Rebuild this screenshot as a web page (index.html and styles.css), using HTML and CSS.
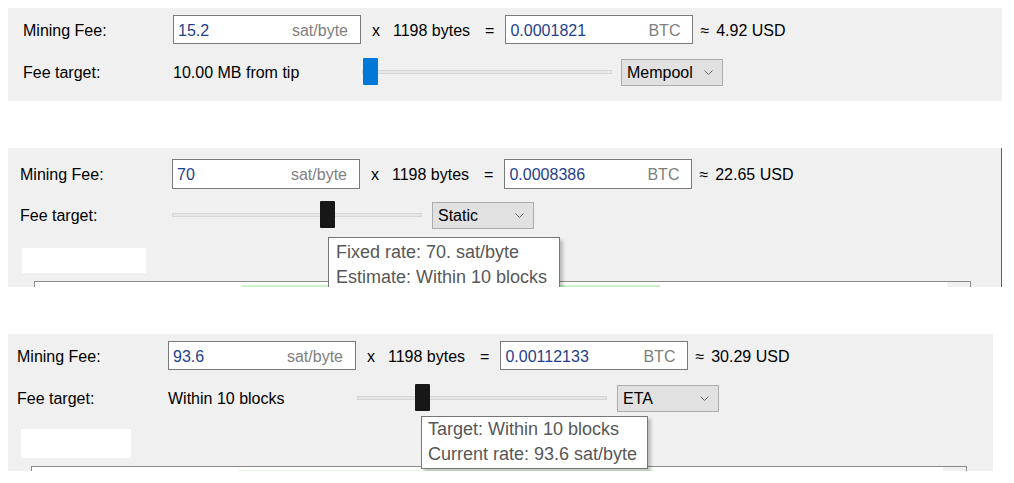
FILE: index.html
```html
<!DOCTYPE html>
<html lang="en">
<head>
    <meta charset="UTF-8">
    <title>Mining Fee</title>
    <link rel="stylesheet" href="styles.css">
</head>
<body>
    <!-- Mempool mode -->
    <div class="panel panel-mempool">
        <div class="row fee-row">
            <span class="label">Mining Fee:</span>
            <div class="amount"><span class="value">15.2</span><span class="unit">sat/byte</span></div>
            <span class="times">x</span>
            <span class="size">1198 bytes</span>
            <span class="equals">=</span>
            <div class="amount"><span class="value">0.0001821</span><span class="unit">BTC</span></div>
            <span class="approx">&asymp;</span>
            <span class="fiat">4.92 USD</span>
        </div>
        <div class="row target-row">
            <span class="label">Fee target:</span>
            <span class="target-text">10.00 MB from tip</span>
            <div class="slider">
                <div class="groove"></div>
                <div class="handle handle-blue" style="left: 1px;"></div>
            </div>
            <div class="combo"><span>Mempool</span>
                <svg width="9" height="5" viewBox="0 0 9 5"><polyline points="0.5,0.5 4.5,4.5 8.5,0.5" fill="none" stroke="#6a6a6a" stroke-width="1"/></svg>
            </div>
        </div>
    </div>

    <!-- Static mode -->
    <div class="panel panel-static">
        <div class="row fee-row">
            <span class="label">Mining Fee:</span>
            <div class="amount"><span class="value">70</span><span class="unit">sat/byte</span></div>
            <span class="times">x</span>
            <span class="size">1198 bytes</span>
            <span class="equals">=</span>
            <div class="amount"><span class="value">0.0008386</span><span class="unit">BTC</span></div>
            <span class="approx">&asymp;</span>
            <span class="fiat">22.65 USD</span>
        </div>
        <div class="row target-row">
            <span class="label">Fee target:</span>
            <div class="slider">
                <div class="groove"></div>
                <div class="handle" style="left: 148px;"></div>
            </div>
            <div class="combo"><span>Static</span>
                <svg width="9" height="5" viewBox="0 0 9 5"><polyline points="0.5,0.5 4.5,4.5 8.5,0.5" fill="none" stroke="#6a6a6a" stroke-width="1"/></svg>
            </div>
        </div>
        <div class="blank"></div>
        <div class="table">
            <div class="table-head">
                <div class="head-green"></div>
                <div class="head-corner"></div>
            </div>
        </div>
        <div class="tooltip">
            <div>Fixed rate: 70. sat/byte</div>
            <div>Estimate: Within 10 blocks</div>
        </div>
    </div>

    <!-- ETA mode -->
    <div class="panel panel-eta">
        <div class="row fee-row">
            <span class="label">Mining Fee:</span>
            <div class="amount"><span class="value">93.6</span><span class="unit">sat/byte</span></div>
            <span class="times">x</span>
            <span class="size">1198 bytes</span>
            <span class="equals">=</span>
            <div class="amount"><span class="value">0.00112133</span><span class="unit">BTC</span></div>
            <span class="approx">&asymp;</span>
            <span class="fiat">30.29 USD</span>
        </div>
        <div class="row target-row">
            <span class="label">Fee target:</span>
            <span class="target-text">Within 10 blocks</span>
            <div class="slider">
                <div class="groove"></div>
                <div class="handle" style="left: 58px;"></div>
            </div>
            <div class="combo"><span>ETA</span>
                <svg width="9" height="5" viewBox="0 0 9 5"><polyline points="0.5,0.5 4.5,4.5 8.5,0.5" fill="none" stroke="#6a6a6a" stroke-width="1"/></svg>
            </div>
        </div>
        <div class="blank"></div>
        <div class="table">
            <div class="table-head">
                <div class="head-green"></div>
                <div class="head-corner"></div>
            </div>
        </div>
        <div class="tooltip">
            <div>Target: Within 10 blocks</div>
            <div>Current rate: 93.6 sat/byte</div>
        </div>
    </div>
</body>
</html>
```

FILE: styles.css
```css
body {
    margin: 8px;
    background-color: white;
    color: black;
    font-family: "Liberation Sans", Arial, sans-serif;
    font-size: 16px;
}

.panel {
    position: relative;
    background-color: #f0f0f0;
    overflow: hidden;
}

.panel-mempool {
    width: 979px;
    padding: 7px 0 15px 15px;
}

.panel-static {
    width: 981px;
    height: 128px;
    margin-top: 47px;
    padding: 11px 0 0 12px;
    border-right: 1px solid #5e5e5e;
}

.panel-eta {
    width: 976px;
    height: 130px;
    margin-top: 47px;
    padding: 7px 0 0 9px;
}

.row {
    display: flex;
    align-items: center;
}

.row > span {
    padding-top: 2px;
}

.fee-row {
    height: 29px;
}

.target-row {
    height: 28px;
    margin-top: 14px;
}

.panel-static .fee-row {
    height: 30px;
}

.panel-static .target-row {
    margin-top: 12px;
}

.label {
    width: 150px;
}

.panel-static .label {
    width: 152px;
}

.panel-eta .label {
    width: 151px;
}

.amount {
    box-sizing: border-box;
    display: flex;
    justify-content: space-between;
    align-items: center;
    width: 188px;
    height: 100%;
    padding: 2px 12px 0 4px;
    background-color: white;
    border: 1px solid #7a7a7a;
}

.value {
    color: #1f3f8c;
}

.unit {
    color: #808080;
}

.times {
    margin: 0 13px 0 11px;
}

.equals {
    margin: 0 11px 0 15px;
}

.approx {
    margin: 0 7px 0 7px;
}

.target-text {
    width: 189px;
}

.slider {
    position: relative;
    width: 250px;
    height: 100%;
}

.groove {
    position: absolute;
    left: 0;
    right: 0;
    top: 12px;
    height: 2px;
    background-color: #e7e7e7;
    border: 1px solid #d6d6d6;
}

.handle {
    position: absolute;
    top: 0;
    width: 15px;
    height: 27px;
    background-color: #171717;
    border-radius: 1px;
}

.handle-blue {
    background-color: #0078d7;
}

.combo {
    box-sizing: border-box;
    display: flex;
    justify-content: space-between;
    align-items: center;
    width: 102px;
    height: 27px;
    margin-left: 10px;
    padding: 1px 9px 0 5px;
    background-color: #e1e1e1;
    border: 1px solid #adadad;
}

.panel-mempool .combo {
    margin-left: 9px;
}

.blank {
    background-color: white;
}

.panel-static .blank {
    width: 124px;
    height: 25px;
    margin-top: 19px;
    margin-left: 2px;
}

.panel-eta .blank {
    width: 110px;
    height: 29px;
    margin-top: 17px;
    margin-left: 4px;
}

.table {
    background-color: white;
    border: 1px solid #8a8a8a;
    height: 20px;
}

.panel-static .table {
    width: 935px;
    margin: 8px 0 0 14px;
}

.panel-eta .table {
    width: 934px;
    margin: 8px 0 0 14px;
}

.table-head {
    display: flex;
    height: 100%;
}

.head-green {
    width: 418px;
    height: 4px;
    margin: 3px 0 0 207px;
    background-color: #c6f2c6;
}

.panel-eta .head-green {
    margin-left: 206px;
    background-color: #e6f7e6;
}

.head-corner {
    width: 23px;
    margin-left: auto;
    background-color: #f0f0f0;
}

.tooltip {
    position: absolute;
    padding: 2px 12px 0 7px;
    background-color: white;
    border: 1px solid #767676;
    box-shadow: 3px 3px 3px rgba(0, 0, 0, 0.22);
    color: #575757;
    font-size: 18px;
    line-height: 25px;
    white-space: nowrap;
}

.panel-static .tooltip {
    left: 320px;
    top: 89px;
}

.panel-eta .tooltip {
    left: 413px;
    top: 82px;
    padding: 0 10px 1px 6px;
}
```
